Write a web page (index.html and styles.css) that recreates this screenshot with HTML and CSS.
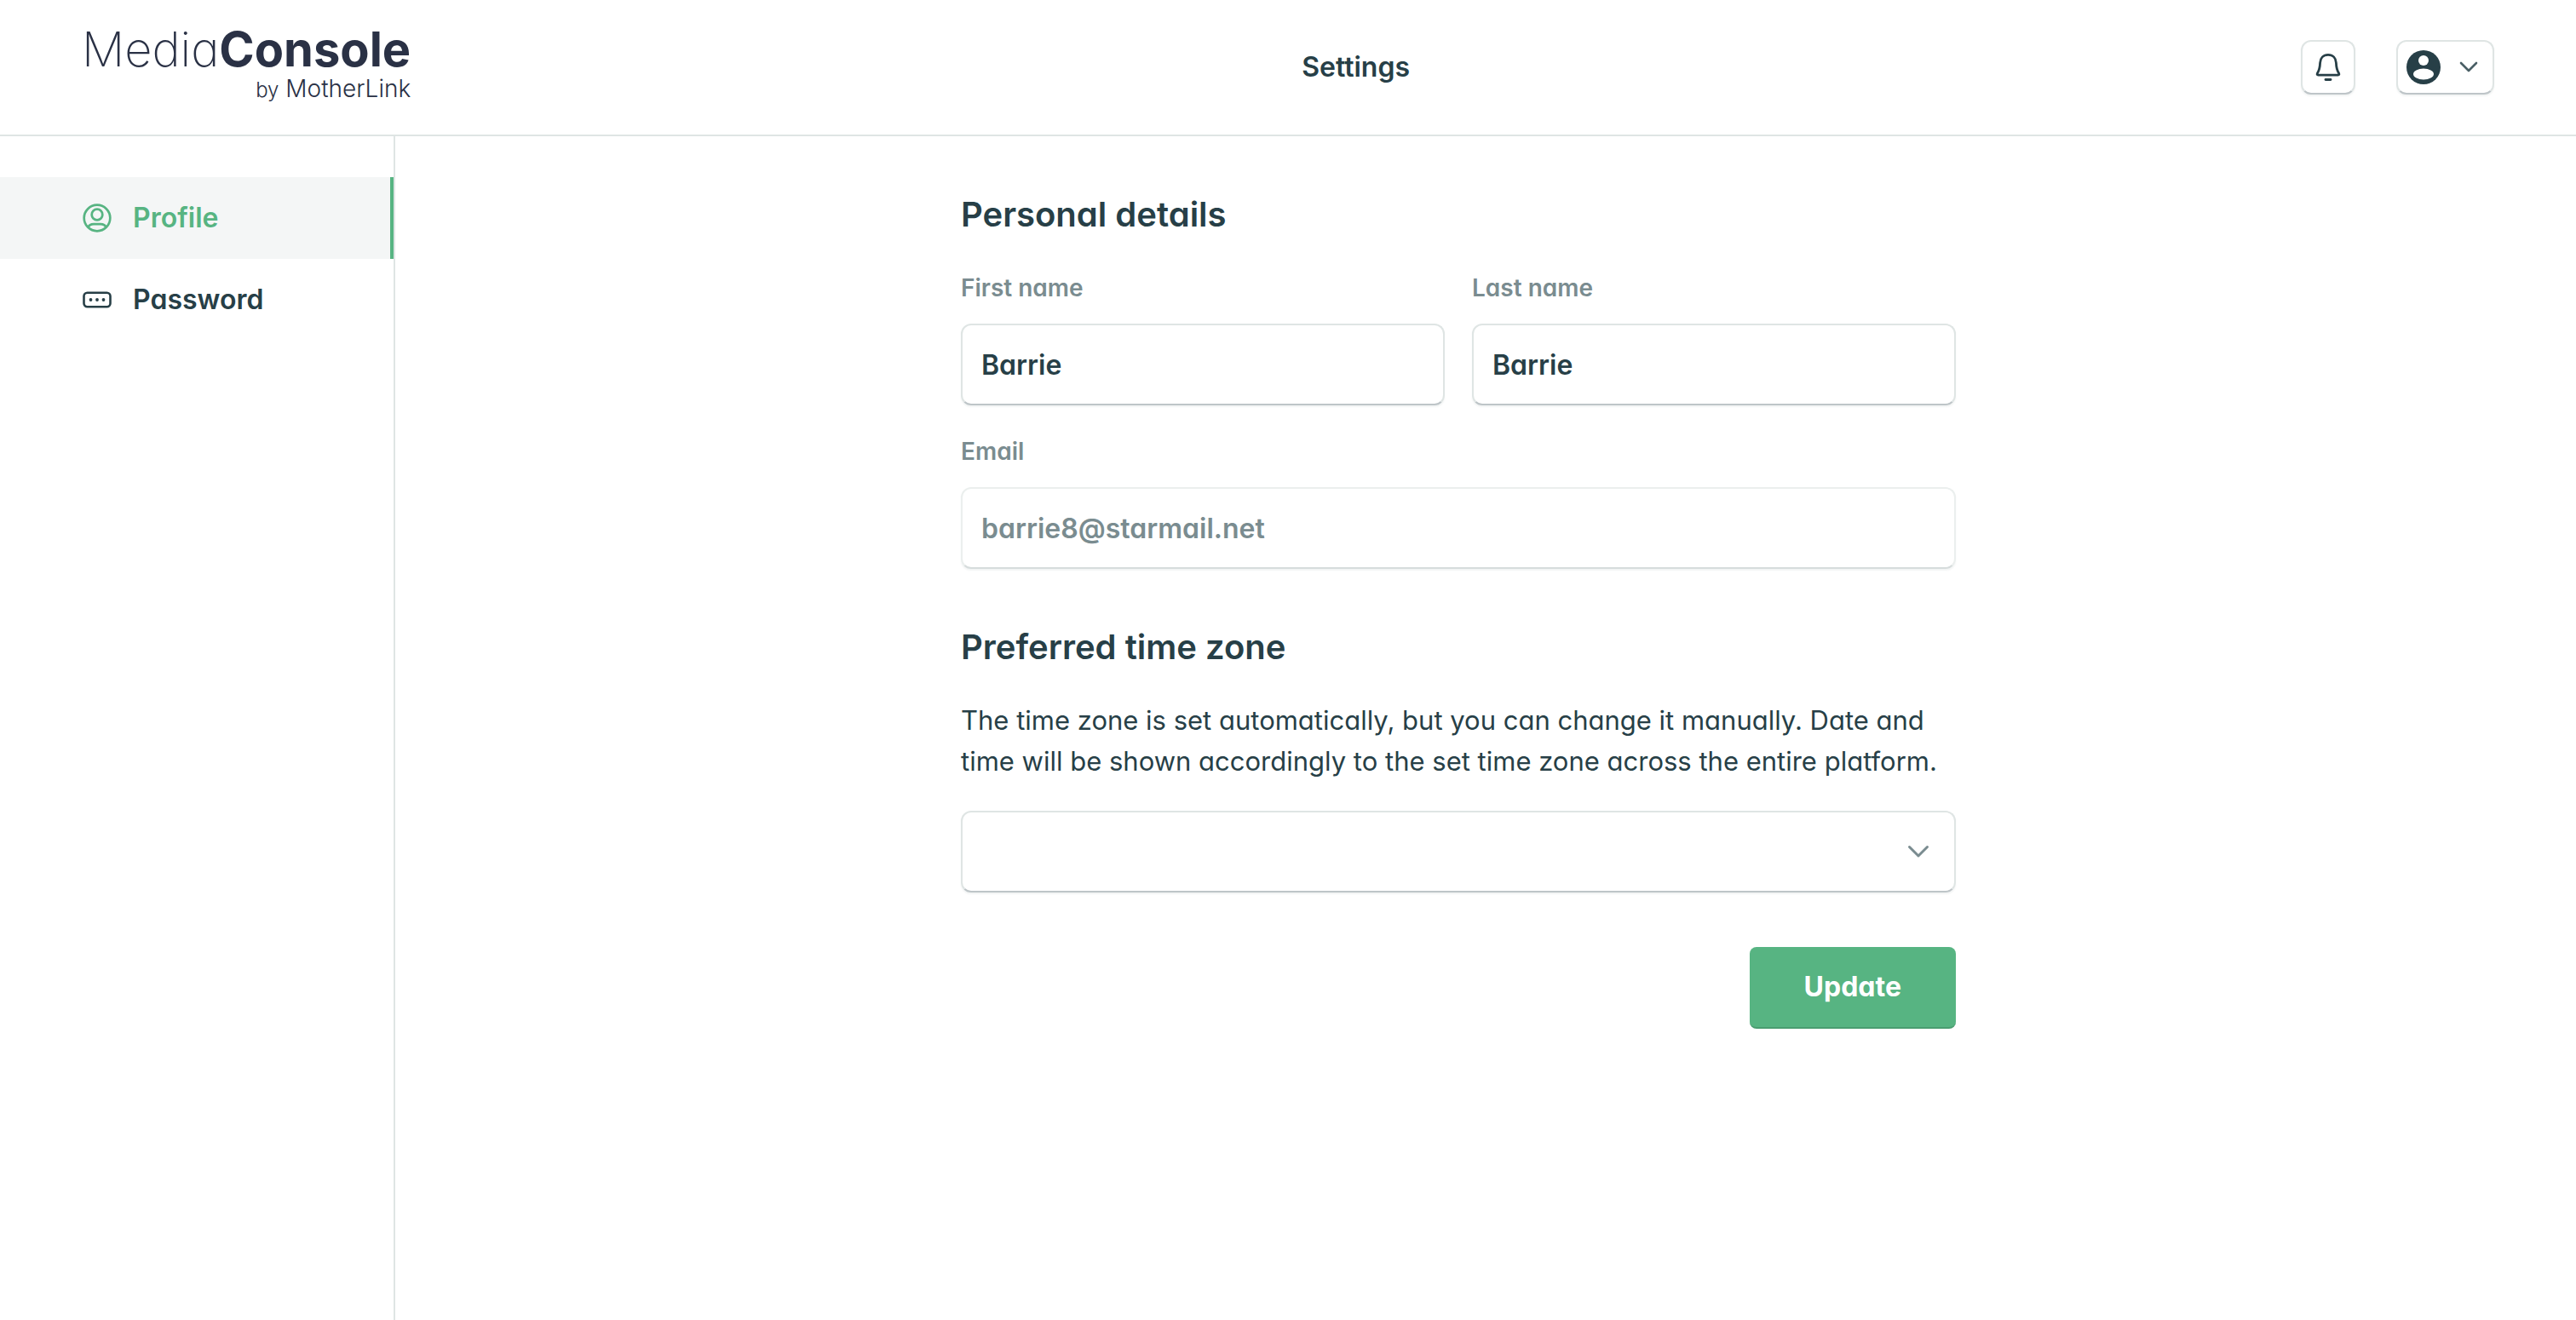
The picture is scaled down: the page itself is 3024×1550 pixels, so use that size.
FILE: index.html
```html
<!DOCTYPE html>
<html lang="en">
<head>
<meta charset="utf-8">
<meta name="viewport" content="width=device-width, initial-scale=1">
<title>Settings</title>
<link rel="stylesheet" href="styles.css">
</head>
<body>
<header class="topbar">
  <a class="logo" href="#">
    <span class="logo-name"><span class="logo-light">Media</span><span class="logo-bold">Console</span></span>
    <span class="logo-byline"><span class="logo-by">by</span> MotherLink</span>
  </a>
  <h1 class="page-title">Settings</h1>
  <div class="actions">
    <button class="icon-button" type="button" aria-label="Notifications">
      <svg width="32" height="34" viewBox="0 0 32 34" fill="none" stroke="currentColor" stroke-width="2.8" stroke-linecap="round" stroke-linejoin="round">
        <path d="M16 2.300c-5.500 0-9.200 3.700-9.400 9.500-.2 5.700-.8 8.600-3.200 12.300-.6 1.100-.3 2.100 1 2.100h23.200c1.300 0 1.600-1 1-2.100-2.400-3.700-3-6.600-3.200-12.300-.2-5.800-3.900-9.500-9.400-9.500z"/>
        <path d="M13 31.500h6"/>
      </svg>
    </button>
    <button class="icon-button user-button" type="button" aria-label="Account menu">
      <svg width="40" height="40" viewBox="0 0 40 40">
        <circle cx="20" cy="20" r="20" fill="currentColor"/>
        <circle cx="20" cy="12" r="6" fill="#fff"/>
        <ellipse cx="20" cy="28" rx="12" ry="6.500" fill="#fff"/>
      </svg>
      <svg width="22" height="14" viewBox="0 0 22 14" fill="none" stroke="#4a5f65" stroke-width="2.600" stroke-linecap="round" stroke-linejoin="round"><path d="M2 2l9 9 9-9"/></svg>
    </button>
  </div>
</header>
<div class="layout">
  <nav class="sidebar" aria-label="Settings">
    <a class="nav-item nav-item-active" href="#profile">
      <svg width="36" height="36" viewBox="0 0 36 36" fill="none" stroke="currentColor" stroke-width="2.700">
        <circle cx="18" cy="18" r="15.300"/>
        <circle cx="18" cy="14" r="6.300"/>
        <path d="M7.500 29c1-2.600 3.500-3.800 6.500-3.800h8c3 0 5.500 1.200 6.500 3.800"/>
      </svg>
      Profile
    </a>
    <a class="nav-item" href="#password">
      <svg width="36" height="36" viewBox="0 0 36 36" fill="none" stroke="currentColor" stroke-width="2.600">
        <rect x="2.500" y="9.700" width="31" height="16.600" rx="4"/>
        <g fill="currentColor" stroke="none"><circle cx="10.500" cy="18" r="1.900"/><circle cx="18" cy="18" r="1.900"/><circle cx="25.500" cy="18" r="1.900"/></g>
      </svg>
      Password
    </a>
  </nav>
  <main class="content">
    <form class="form">
      <h2 class="section-title">Personal details</h2>
      <div class="fields">
        <div class="field">
          <label class="label" for="first">First name</label>
          <input class="control" id="first" type="text" value="Barrie">
        </div>
        <div class="field">
          <label class="label" for="last">Last name</label>
          <input class="control" id="last" type="text" value="Barrie">
        </div>
        <div class="field field-wide">
          <label class="label" for="email">Email</label>
          <input class="control" id="email" type="email" value="barrie8@starmail.net" disabled>
        </div>
      </div>
      <h2 class="section-title section-title-next" id="zone-title">Preferred time zone</h2>
      <p class="description">The time zone is set automatically, but you can change it manually. Date and time will be shown accordingly to the set time zone across the entire platform.</p>
      <div class="select-wrap">
        <select class="control" aria-labelledby="zone-title"><option value=""></option></select>
        <svg class="select-arrow" width="26" height="16" viewBox="0 0 26 16" fill="none" stroke="#7a8c90" stroke-width="3" stroke-linecap="round" stroke-linejoin="round"><path d="M2.500 2.500L13 13 23.500 2.500"/></svg>
      </div>
      <button class="submit" type="submit">Update</button>
    </form>
  </main>
</div>
</body>
</html>
```
FILE: styles.css
```css
* {
  box-sizing: border-box;
}

body {
  margin: 0;
  min-height: 100vh;
  display: flex;
  flex-direction: column;
  background: #fff;
  color: #273f47;
  font-family: Inter, "Liberation Sans", sans-serif;
  font-feature-settings: "cv11";
  font-size: 32px;
  line-height: 48px;
}

button,
input,
select {
  font: inherit;
  font-feature-settings: inherit;
  color: inherit;
}

svg {
  display: block;
  flex: none;
}

.topbar {
  display: flex;
  align-items: center;
  justify-content: space-between;
  min-height: 160px;
  padding: 0 96px;
  border-bottom: 2px solid #dfe5e4;
}

.logo {
  display: flex;
  flex-direction: column;
  align-items: flex-end;
  color: #2a3145;
  text-decoration: none;
}

.logo-name {
  font-size: 56px;
  line-height: 52px;
}

.logo-light {
  font-weight: 200;
}

.logo-bold {
  font-weight: 700;
}

.logo-byline {
  font-size: 28px;
  line-height: 40px;
  font-weight: 300;
}

.logo-by {
  font-size: 24px;
}

.page-title {
  margin: 0;
  font-size: 32px;
  font-weight: 600;
}

.actions {
  display: flex;
  gap: 48px;
}

.icon-button {
  display: flex;
  align-items: center;
  justify-content: center;
  width: 64px;
  height: 64px;
  padding: 0;
  background: #fff;
  border: 2px solid #dfe5e4;
  border-bottom-color: #bec5c8;
  border-radius: 12px;
  box-shadow: 0 2px 2px rgba(39, 63, 71, 0.06);
}

.user-button {
  width: 115px;
  justify-content: space-between;
  padding: 0 17px 0 10px;
}

.layout {
  display: flex;
  flex: 1;
}

.sidebar {
  flex: none;
  width: 464px;
  padding-top: 48px;
  border-right: 2px solid #dfe5e4;
}

.nav-item {
  display: flex;
  align-items: center;
  gap: 24px;
  height: 96px;
  padding-left: 96px;
  color: inherit;
  font-weight: 600;
  text-decoration: none;
}

.nav-item-active {
  background: #f4f6f6;
  color: #57b482;
  border-right: 4px solid #57b482;
}

.content {
  flex: 1;
  padding: 64px 96px 64px 32px;
}

.form {
  display: flex;
  flex-direction: column;
  max-width: 1168px;
  margin: 0 auto;
}

.section-title {
  margin: 0 0 40px;
  font-size: 40px;
  line-height: 56px;
  font-weight: 600;
}

.section-title-next {
  margin: 64px 0 34px;
}

.fields {
  display: grid;
  grid-template-columns: 1fr 1fr;
  gap: 36px 32px;
}

.field {
  display: flex;
  flex-direction: column;
  gap: 24px;
}

.field-wide {
  grid-column: 1 / -1;
}

.label {
  font-size: 28px;
  line-height: 36px;
  font-weight: 600;
  color: #7a8c90;
}

.control {
  width: 100%;
  height: 96px;
  padding: 0 22px;
  background: #fff;
  border: 2px solid #dfe5e4;
  border-bottom-color: #bec5c8;
  border-radius: 12px;
  box-shadow: 0 2px 2px rgba(39, 63, 71, 0.06);
  font-weight: 600;
  appearance: none;
}

.control:disabled {
  border-color: #ebefee;
  border-bottom-color: #d6dcdc;
  color: #7a8c90;
}

.description {
  margin: 0 0 34px;
  font-size: 31px;
}

.select-wrap {
  position: relative;
  display: flex;
}

.select-arrow {
  position: absolute;
  top: 40px;
  right: 31px;
  pointer-events: none;
}

.submit {
  align-self: flex-end;
  height: 96px;
  margin-top: 64px;
  padding: 0 64px;
  background: #57b482;
  border: 0;
  border-bottom: 2px solid #4a9d70;
  border-radius: 8px;
  color: #fff;
  font-weight: 700;
}
```
